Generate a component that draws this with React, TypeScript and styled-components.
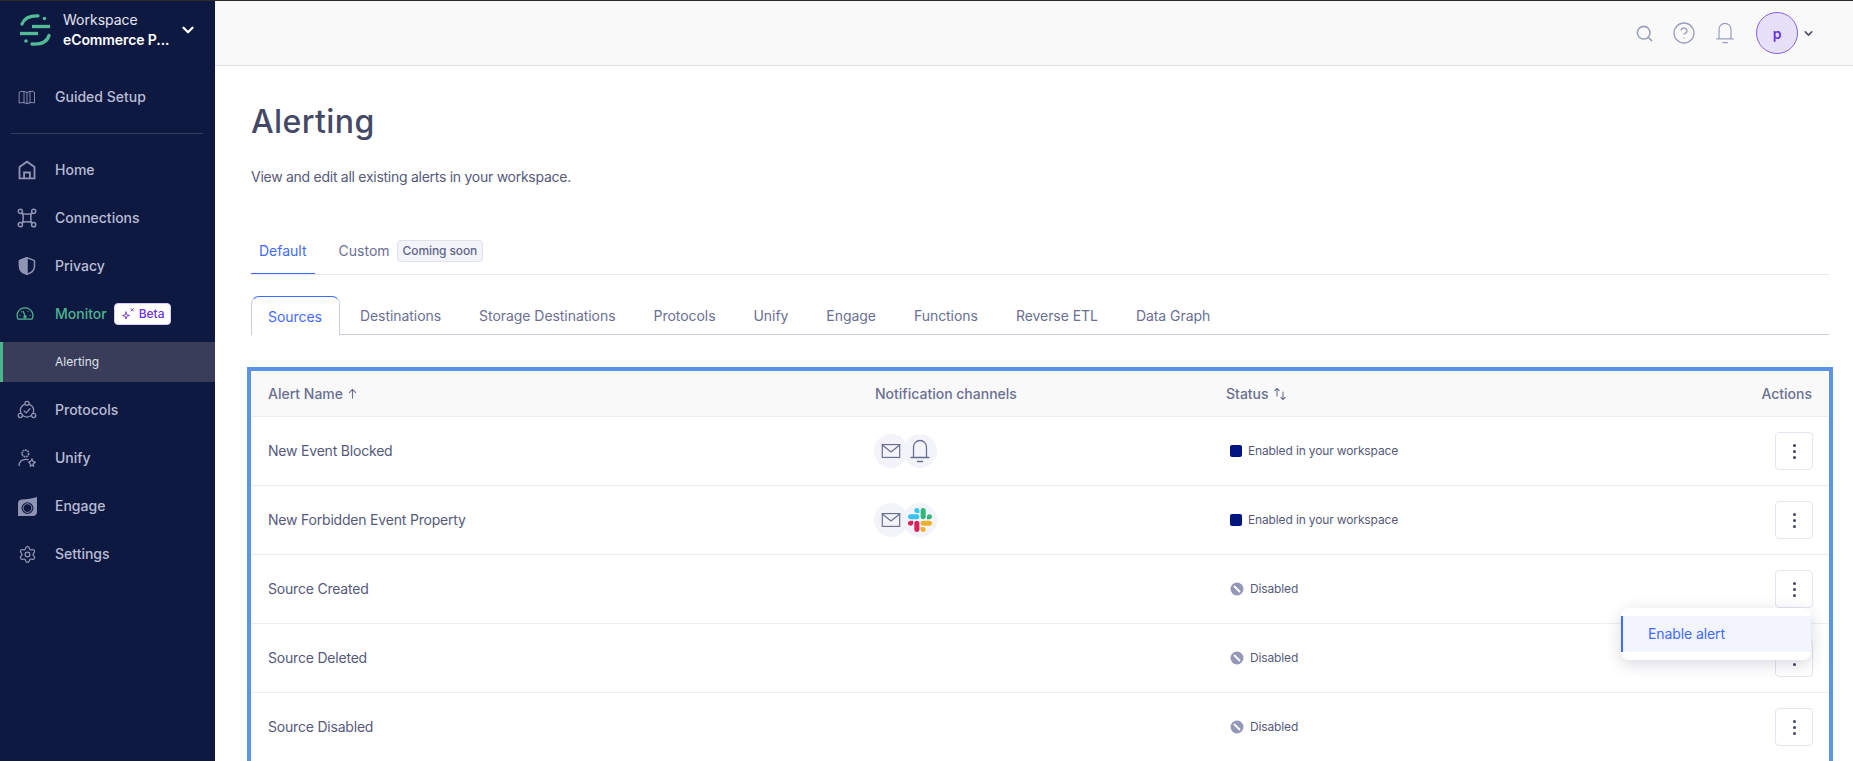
import React, {FC} from "react";
import styled, {createGlobalStyle} from "styled-components";
import {Search, CircleHelp, Settings, ChevronDown} from "lucide-react";

const Global = createGlobalStyle`
  html, body { margin: 0; padding: 0; height: 100%; overflow: hidden; background: #fff; }
  body { font-family: Inter, "Noto Sans", sans-serif; -webkit-font-smoothing: antialiased; }
  * { box-sizing: border-box; }
`;

const Page = styled.div`
  display: flex;
  height: 761px;
  border-top: 1px solid #2b2b2b;
  overflow: hidden;
`;

const Sidebar = styled.aside`
  width: 215px;
  flex: none;
  background: #0e1942;
  display: flex;
  flex-direction: column;
`;

const Workspace = styled.div`
  height: 58px;
  margin-bottom: 14px;
  display: flex;
  align-items: center;
  padding: 0 18px 0 20px;
`;

const WorkspaceText = styled.div`
  margin-left: 12px;
  font-size: 14px;
  line-height: 20px;
  color: #e4e6f0;
  white-space: nowrap;
`;

const WorkspaceName = styled.div`
  font-weight: 600;
  color: #fff;
  letter-spacing: -0.1px;
`;

const WorkspaceChevron = styled(ChevronDown)`
  margin-left: auto;
  color: #fff;
`;

const Divider = styled.hr`
  border: 0;
  border-top: 1px solid #343c5f;
  margin: 12px 12px 12px 11px;
`;

const NavItem = styled.div<{$active?: boolean}>`
  height: 48px;
  display: flex;
  align-items: center;
  padding: 0 0 1px 55px;
  position: relative;
  font-size: 14px;
  font-weight: 500;
  color: ${p => (p.$active ? "#4cb58e" : "#b9bdd3")};
`;

const NavIcon = styled.span<{$left?: number}>`
  position: absolute;
  left: ${p => p.$left ?? 17}px;
  top: 50%;
  transform: translateY(-50%);
  width: 20px;
  height: 20px;
  display: flex;
  align-items: center;
  justify-content: center;
  color: #8f94b3;
`;

const SubItem = styled.div`
  height: 40px;
  margin: 4px 0;
  display: flex;
  align-items: center;
  padding: 0 0 1px 52px;
  background: #393d59;
  border-left: 3px solid #4cb58e;
  font-size: 12px;
  font-weight: 400;
  color: #dfe1ea;
`;

const BetaBadge = styled.span`
  margin-left: 7px;
  height: 22px;
  padding: 0 5px 0 6px;
  display: inline-flex;
  align-items: center;
  gap: 4px;
  background: #fff;
  border: 1px solid #d9ccf6;
  border-radius: 4px;
  font-size: 12px;
  font-weight: 500;
  color: #6b33e0;
`;

const Main = styled.main`
  flex: 1;
  min-width: 0;
  display: flex;
  flex-direction: column;
`;

const TopBar = styled.header`
  height: 65px;
  flex: none;
  background: #f9f9f9;
  border-bottom: 1px solid #dcdde6;
  display: flex;
  align-items: center;
  justify-content: flex-end;
  padding-right: 38px;
  color: #9a9fbf;
`;

const TopIcons = styled.div`
  display: flex;
  align-items: center;
  gap: 18px;
  margin-right: 20px;
`;

const Avatar = styled.div`
  width: 42px;
  height: 42px;
  border-radius: 50%;
  background: #e6e0f8;
  border: 1px solid #8a5fe0;
  display: flex;
  align-items: center;
  justify-content: center;
  font-size: 14px;
  font-weight: 600;
  color: #6b33e0;
`;

const AvatarChevron = styled(ChevronDown)`
  margin-left: 4px;
  color: #4c5170;
`;

const Content = styled.div`
  padding: 36px 24px 0 36px;
`;

const Title = styled.h1`
  margin: 0;
  font-size: 32px;
  line-height: 40px;
  font-weight: 500;
  letter-spacing: 0.4px;
  color: #434966;
`;

const Description = styled.p`
  margin: 25px 0 0;
  font-size: 14px;
  line-height: 20px;
  letter-spacing: -0.27px;
  color: #555a7a;
`;

const TopTabs = styled.div`
  margin-top: 44px;
  height: 44px;
  display: flex;
  border-bottom: 1px solid #e8e9f1;
`;

const TopTab = styled.div<{$active?: boolean}>`
  height: 43px;
  padding: 0 8px 4px;
  margin-right: 16px;
  display: flex;
  align-items: center;
  font-size: 14px;
  color: ${p => (p.$active ? "#3f6bff" : "#6a7093")};
  box-shadow: ${p => (p.$active ? "inset 0 -1px 0 #3f6bff" : "none")};
`;

const SoonBadge = styled.span`
  margin-left: 7px;
  height: 22px;
  padding: 0 5px;
  display: inline-flex;
  align-items: center;
  background: #f3f4f9;
  border: 1px solid #dfe1ec;
  border-radius: 4px;
  font-size: 12px;
  font-weight: 500;
  letter-spacing: -0.1px;
  color: #5f6488;
`;

const SubTabs = styled.div`
  margin-top: 21px;
  height: 39px;
  display: flex;
  border-bottom: 1px solid #cbcdd9;
`;

const SubTab = styled.div`
  height: 38px;
  padding: 0 19px;
  display: flex;
  align-items: center;
  font-size: 14px;
  letter-spacing: -0.05px;
  color: #6a7093;
`;

const ActiveSubTab = styled(SubTab)`
  height: 39px;
  padding: 0 17px 0 16px;
  margin-right: 1px;
  color: #3f6bff;
  background: #fff;
  border: 1px solid #cbd0e4;
  border-top-color: #3f6bff;
  border-bottom: 0;
  border-radius: 8px 8px 0 0;
`;

const TableFrame = styled.section`
  margin: 32px -4px 0;
  border: 4px solid #5b93e8;
`;

const columns = "607px 351px 1fr 56px";

const HeadRow = styled.div`
  height: 46px;
  display: grid;
  grid-template-columns: ${columns};
  align-items: center;
  padding: 0 17px;
  background: #f9f9f9;
  border-bottom: 1px solid #ecedf3;
  font-size: 14px;
  font-weight: 500;
  color: #6a7093;
`;

const HeadCell = styled.div<{$right?: boolean}>`
  display: flex;
  align-items: center;
  gap: 4px;
  justify-content: ${p => (p.$right ? "flex-end" : "flex-start")};
`;

const Row = styled.div`
  height: 69px;
  display: grid;
  grid-template-columns: ${columns};
  align-items: center;
  padding: 0 16px 0 17px;
  border-bottom: 1px solid #ecedf3;
  font-size: 14px;
  letter-spacing: -0.2px;
  color: #555a7a;
`;

const NameCell = styled.div`
  padding-bottom: 2px;
`;

const Channels = styled.div`
  display: flex;
  margin-left: -1px;
`;

const ChannelCircle = styled.span`
  width: 34px;
  height: 34px;
  border-radius: 50%;
  background: #f3f4f9;
  display: flex;
  align-items: center;
  justify-content: center;
  color: #6a7093;
  & + & { margin-left: -5px; }
`;

const Status = styled.div`
  display: flex;
  align-items: center;
  gap: 6px;
  margin-left: 4px;
  padding-bottom: 1px;
  font-size: 12px;
  letter-spacing: -0.14px;
  color: #555a7a;
`;

const EnabledDot = styled.span`
  width: 12px;
  height: 12px;
  border-radius: 2px;
  background: #001580;
`;

const ActionCell = styled.div`
  position: relative;
  display: flex;
  justify-content: flex-end;
`;

const KebabButton = styled.button`
  width: 38px;
  height: 38px;
  padding: 0;
  background: #fff;
  border: 1px solid #e4e5ee;
  border-radius: 4px;
  display: flex;
  flex-direction: column;
  align-items: center;
  justify-content: center;
  gap: 3px;
`;

const KebabDot = styled.span`
  width: 3px;
  height: 3px;
  border-radius: 50%;
  background: #3f4566;
`;

const Menu = styled.div`
  position: absolute;
  top: 38px;
  right: 2px;
  width: 190px;
  padding: 8px 0;
  background: #fff;
  border-radius: 8px;
  box-shadow: 0 4px 16px rgba(40, 45, 80, 0.18);
  z-index: 5;
`;

const MenuItem = styled.div`
  height: 36px;
  display: flex;
  align-items: center;
  padding: 0 0 1px 25px;
  background: #f2f5fe;
  border-left: 2px solid #3f6bff;
  font-size: 14px;
  letter-spacing: -0.1px;
  color: #3f6bff;
`;

type IconProps = {size?: number; color?: string; width?: number};

const Line: FC<IconProps & {children: React.ReactNode; box?: number}> = ({size = 20, color = "currentColor", width = 1.6, box = 24, children}) => (
  <svg width={size} height={size} viewBox={`0 0 ${box} ${box}`} fill="none" stroke={color} strokeWidth={width} strokeLinecap="round" strokeLinejoin="round">
    {children}
  </svg>
);

const SegmentLogo = () => (
  <svg width="31" height="32" viewBox="0 0 31 32" fill="none" stroke="#52bd94" strokeWidth="3.3" strokeLinecap="round">
    <path d="M12 12.500H30" strokeLinecap="butt" />
    <path d="M0 19.500H18" strokeLinecap="butt" />
    <path d="M2 10C4 4.500 9 1.500 18 1.800" />
    <path d="M29 21.500C27.500 27 22 30.500 12 30" />
    <circle cx="24.500" cy="4.500" r="1.800" fill="#52bd94" stroke="none" />
    <circle cx="6" cy="27" r="1.800" fill="#52bd94" stroke="none" />
  </svg>
);

const MapIcon = () => (
  <Line size={18} width={1.2}>
    <path d="M2 5.500C5 4 8 4 12 6c4-2 7-2 10-.5V20c-3-1-6-1-10 1-4-2-7-2-10-1z" />
    <path d="M8 4.500V20M12 6v15M16 4.500V20" />
  </Line>
);

const HomeIcon = () => (
  <Line size={20} width={2.2}>
    <path d="M3 22V8.500L12 2l9 6.500V22z" strokeLinejoin="miter" />
    <path d="M8.500 22v-7h7v7" strokeLinejoin="miter" />
  </Line>
);

const ConnectionsIcon = () => (
  <Line size={20} width={1.8}>
    <circle cx="4" cy="4" r="2.500" />
    <circle cx="20" cy="4" r="2.500" />
    <circle cx="4" cy="20" r="2.500" />
    <circle cx="20" cy="20" r="2.500" />
    <path d="M6 6c2 2 10 2 12 0-2 2-2 10 0 12-2-2-10-2-12 0 2-2 2-10 0-12z" />
  </Line>
);

const ShieldIcon = () => (
  <svg width="20" height="20" viewBox="0 0 24 24" fill="none" stroke="#8f94b3" strokeWidth="1.8" strokeLinejoin="round">
    <path d="M12 2 3 5.500V12c0 5 4 8.500 9 10 5-1.500 9-5 9-10V5.500z" />
    <path d="M12 2 3 5.500V12c0 5 4 8.500 9 10z" fill="#8f94b3" />
  </svg>
);

const GaugeIcon = () => (
  <Line size={20} color="#4cb58e" width={1.5}>
    <path d="M3.500 18C.5 11.500 5 4.500 12 4.500S23.500 11.500 20.500 18z" />
    <path d="M12 14.500 10 9M6 13.500h.01M8 9.500h.01M15.500 9h.01M18 13.500h.01" />
    <circle cx="12" cy="15.500" r="1.300" />
  </Line>
);

const ProtocolsIcon = () => (
  <Line size={20} width={1.500}>
    <circle cx="12" cy="12.500" r="8" />
    <circle cx="12" cy="4" r="2.500" fill="#0e1942" />
    <circle cx="4" cy="18.500" r="2.500" fill="#0e1942" />
    <circle cx="20" cy="18.500" r="2.500" fill="#0e1942" />
    <path d="M8.500 13l2.500 2.500 4.500-5" />
  </Line>
);

const UnifyIcon = () => (
  <Line size={20} width={1.500}>
    <circle cx="10" cy="6.500" r="4" strokeDasharray="2.200 0.800" strokeWidth={2} strokeLinecap="butt" />
    <path d="M2.500 21c0-4.500 3.500-7.500 8-7.500 1 0 2 .2 3 .5" />
    <path d="M18 13l1 3 3 1-2.500 2 .5 3-2-1.500-2 1.500 0-3-2-2 2.500-1z" />
  </Line>
);

const EngageIcon = () => (
  <svg width="19" height="19" viewBox="0 0 24 24">
    <path fillRule="evenodd" fill="#8f94b3" d="M5 3c6 0 13-1 19-3v19c0 3-2 5-5 5H0V8c0-3 2-5 5-5zm7 3.500a7.500 7.500 0 1 0 0 15 7.500 7.500 0 0 0 0-15z" />
    <circle cx="12" cy="14" r="5.500" fill="none" stroke="#8f94b3" strokeWidth="1.200" />
  </svg>
);

const Sparkle = () => (
  <svg width="14" height="14" viewBox="0 0 14 14" fill="none" stroke="#6b33e0" strokeWidth="0.9" strokeLinecap="round" strokeLinejoin="round">
    <path d="M5 5 5.800 7.700 8.500 8.500 5.800 9.300 5 12 4.200 9.300 1.500 8.500 4.200 7.700z" />
    <path d="M10 1.500l2.500 2.500M12.500 1.500 10 4" />
  </svg>
);

const BellIcon: FC<IconProps> = ({size = 20}) => (
  <Line size={size} width={1.300}>
    <path d="M3 18.500h18M5.500 18.500V8a6.500 6.500 0 0 1 13 0v10.500" />
    <path d="M9.500 22.500h5" />
  </Line>
);

const MailIcon = () => (
  <Line size={22} width={1.300}>
    <rect x="2.500" y="5" width="19" height="14" strokeLinejoin="miter" />
    <path d="M2.500 5.500 12 13l9.500-7.500" />
  </Line>
);

const SlackIcon = () => (
  <svg width="24" height="24" viewBox="0 0 122.800 122.800">
    <path fill="#E01E5A" d="M25.800 77.600c0 7.100-5.800 12.900-12.900 12.900S0 84.700 0 77.600s5.800-12.900 12.900-12.900h12.900v12.900z" />
    <path fill="#E01E5A" d="M32.300 77.600c0-7.100 5.800-12.900 12.900-12.900s12.900 5.800 12.900 12.900v32.300c0 7.100-5.800 12.900-12.900 12.900s-12.900-5.800-12.900-12.900V77.600z" />
    <path fill="#36C5F0" d="M45.200 25.800c-7.100 0-12.900-5.800-12.900-12.900S38.100 0 45.200 0s12.900 5.800 12.900 12.900v12.900H45.200z" />
    <path fill="#36C5F0" d="M45.200 32.300c7.100 0 12.900 5.800 12.900 12.900s-5.800 12.900-12.900 12.900H12.900C5.800 58.100 0 52.300 0 45.200s5.800-12.900 12.900-12.900h32.300z" />
    <path fill="#2EB67D" d="M97 45.200c0-7.100 5.800-12.900 12.900-12.900s12.900 5.800 12.900 12.900-5.800 12.900-12.900 12.900H97V45.200z" />
    <path fill="#2EB67D" d="M90.500 45.200c0 7.100-5.800 12.900-12.900 12.900s-12.900-5.800-12.900-12.900V12.900C64.700 5.800 70.500 0 77.600 0s12.900 5.800 12.900 12.900v32.300z" />
    <path fill="#ECB22E" d="M77.600 97c7.100 0 12.900 5.800 12.900 12.900s-5.800 12.900-12.900 12.900-12.900-5.800-12.900-12.900V97h12.900z" />
    <path fill="#ECB22E" d="M77.600 90.500c-7.100 0-12.900-5.800-12.900-12.900s5.800-12.900 12.900-12.900h32.300c7.100 0 12.900 5.800 12.900 12.900s-5.800 12.900-12.900 12.900H77.600z" />
  </svg>
);

const DisabledIcon = () => (
  <svg width="14" height="14" viewBox="0 0 14 14">
    <circle cx="7" cy="7" r="6.500" fill="#9498b8" />
    <path d="M4.500 4.500 9.500 9.500" stroke="#fff" strokeWidth="1.800" strokeLinecap="round" />
  </svg>
);

const SortUp = () => (
  <Line size={11} box={12} width={1.200}>
    <path d="M6 11V1.500M2.500 5 6 1.500 9.500 5" />
  </Line>
);

const SortBoth = () => (
  <svg width="14" height="14" viewBox="0 0 14 14" fill="none" stroke="#6a7093" strokeWidth="1.100" strokeLinecap="round" strokeLinejoin="round">
    <path d="M4 9V1.500M1.800 3.700 4 1.500l2.200 2.200" />
    <path d="M10 5v7.500M7.800 10.300 10 12.500l2.200-2.200" />
  </svg>
);

const Kebab = () => (
  <KebabButton aria-label="Actions">
    <KebabDot />
    <KebabDot />
    <KebabDot />
  </KebabButton>
);

type TAlert = {
  name: string
  channels: React.ReactNode[]
  enabled: boolean
  menu?: boolean
}

const alerts: TAlert[] = [
  {name: "New Event Blocked", channels: [<MailIcon key="m" />, <BellIcon key="b" size={24} />], enabled: true},
  {name: "New Forbidden Event Property", channels: [<MailIcon key="m" />, <SlackIcon key="s" />], enabled: true},
  {name: "Source Created", channels: [], enabled: false, menu: true},
  {name: "Source Deleted", channels: [], enabled: false},
  {name: "Source Disabled", channels: [], enabled: false},
];

const subTabs = ["Destinations", "Storage Destinations", "Protocols", "Unify", "Engage", "Functions", "Reverse ETL", "Data Graph"];

export default function App() {
  return (
    <Page>
      <Global />
      <Sidebar>
        <Workspace>
          <SegmentLogo />
          <WorkspaceText>
            Workspace
            <WorkspaceName>eCommerce P...</WorkspaceName>
          </WorkspaceText>
          <WorkspaceChevron size={18} strokeWidth={3} />
        </Workspace>
        <NavItem><NavIcon><MapIcon /></NavIcon>Guided Setup</NavItem>
        <Divider />
        <NavItem><NavIcon><HomeIcon /></NavIcon>Home</NavItem>
        <NavItem><NavIcon><ConnectionsIcon /></NavIcon>Connections</NavItem>
        <NavItem><NavIcon><ShieldIcon /></NavIcon>Privacy</NavItem>
        <NavItem $active><NavIcon $left={15}><GaugeIcon /></NavIcon>Monitor<BetaBadge><Sparkle />Beta</BetaBadge></NavItem>
        <SubItem>Alerting</SubItem>
        <NavItem><NavIcon><ProtocolsIcon /></NavIcon>Protocols</NavItem>
        <NavItem><NavIcon><UnifyIcon /></NavIcon>Unify</NavItem>
        <NavItem><NavIcon><EngageIcon /></NavIcon>Engage</NavItem>
        <NavItem><NavIcon><Settings size={19} strokeWidth={1.6} /></NavIcon>Settings</NavItem>
      </Sidebar>
      <Main>
        <TopBar>
          <TopIcons>
            <Search size={19} strokeWidth={2} />
            <CircleHelp size={24} strokeWidth={1.3} />
            <BellIcon size={22} />
          </TopIcons>
          <Avatar>p</Avatar>
          <AvatarChevron size={13} strokeWidth={3} />
        </TopBar>
        <Content>
          <Title>Alerting</Title>
          <Description>View and edit all existing alerts in your workspace.</Description>
          <TopTabs>
            <TopTab $active>Default</TopTab>
            <TopTab>Custom<SoonBadge>Coming soon</SoonBadge></TopTab>
          </TopTabs>
          <SubTabs>
            <ActiveSubTab>Sources</ActiveSubTab>
            {subTabs.map(t => <SubTab key={t}>{t}</SubTab>)}
          </SubTabs>
          <TableFrame>
            <HeadRow>
              <HeadCell>Alert Name <SortUp /></HeadCell>
              <HeadCell>Notification channels</HeadCell>
              <HeadCell>Status <SortBoth /></HeadCell>
              <HeadCell $right>Actions</HeadCell>
            </HeadRow>
            {alerts.map(a => (
              <Row key={a.name}>
                <NameCell>{a.name}</NameCell>
                <Channels>
                  {a.channels.map((c, i) => <ChannelCircle key={i}>{c}</ChannelCircle>)}
                </Channels>
                <Status>
                  {a.enabled ? <EnabledDot /> : <DisabledIcon />}
                  {a.enabled ? "Enabled in your workspace" : "Disabled"}
                </Status>
                <ActionCell>
                  <Kebab />
                  {a.menu && <Menu><MenuItem>Enable alert</MenuItem></Menu>}
                </ActionCell>
              </Row>
            ))}
          </TableFrame>
        </Content>
      </Main>
    </Page>
  );
}
